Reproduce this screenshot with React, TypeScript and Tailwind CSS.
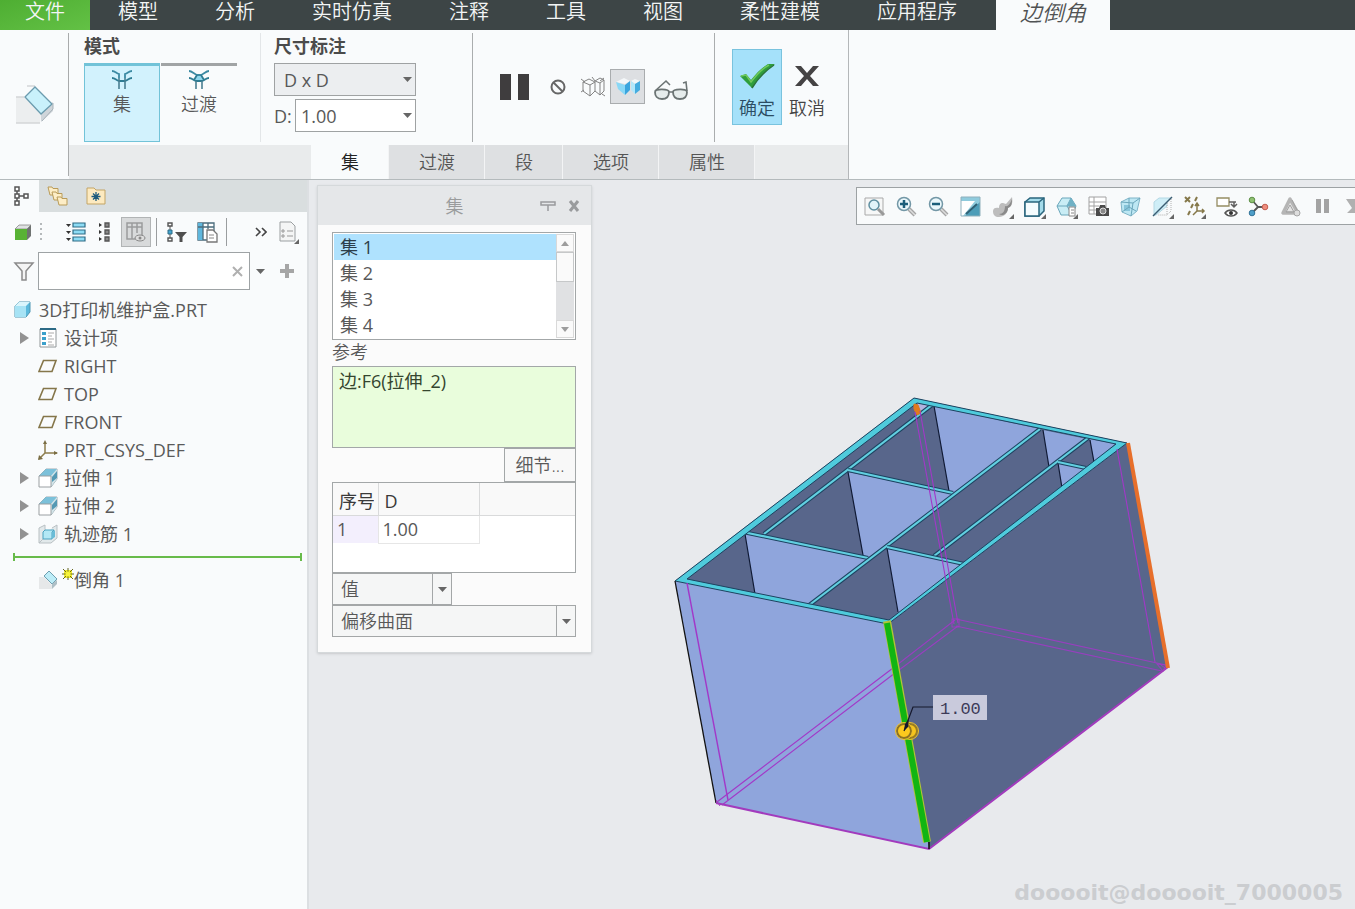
import { useState, type ReactNode } from "react";

const menus = ["模型", "分析", "实时仿真", "注释", "工具", "视图", "柔性建模", "应用程序"];
const panelTabs = ["集", "过渡", "段", "选项", "属性"];
const sets = ["集 1", "集 2", "集 3", "集 4"];

/* ---------- shared bits ---------- */

const Svg = ({ w = 20, h = 20, children }: { w?: number; h?: number; children: ReactNode }) => (
  <svg width={w} height={h} viewBox={`0 0 ${w} ${h}`} fill="none" className="shrink-0" aria-hidden="true">
    {children}
  </svg>
);

const Caret = () => (
  <Svg w={9} h={5}>
    <path d="M0 0h9L4.500 5z" fill="#666" />
  </Svg>
);

const Corner = () => <path d="M22 18v5h-5z" fill="#666" />;

/* ---------- ribbon icons ---------- */

const ChamferLarge = () => (
  <Svg w={40} h={40}>
    <path d="M2 12h8l17 18-1 8H2z" fill="#eceeef" />
    <path d="M2 12h8M2 38h24M13 1h8" stroke="#d3d6d8" strokeWidth="1.500" />
    <path d="M39 17v9L27 37v-9z" fill="#cfd5da" />
    <path d="M11 12 21 2l17 17-11 10z" fill="#c9f1fb" stroke="#6b9bae" strokeWidth="1.300" />
    <path d="M39 18v6L28 36" stroke="#a9b3b9" />
  </Svg>
);

const SetIcon = () => (
  <Svg w={22} h={20}>
    <path d="M1 1c3 0 4 2 7 3v4M21 1c-3 0-4 2-7 3v4" stroke="#3b8aa3" strokeWidth="1.800" />
    <path d="M1 8c3 0 4 2 7 3h6c3-1 4-3 7-3" stroke="#2e7c93" strokeWidth="1.800" />
    <path d="M8 8v11M14 8v11" stroke="#4a7f92" strokeWidth="1.600" />
  </Svg>
);

const TransitionIcon = () => (
  <Svg w={22} h={20}>
    <path d="M9 5h4l3 6H6z" fill="#8fd6ec" />
    <path d="M1 1c3 0 5 3 8 4h4c3-1 5-4 8-4" stroke="#3b8aa3" strokeWidth="1.800" />
    <path d="M1 8c3 0 4 2 7 3h6c3-1 4-3 7-3M9 5l-3 5M13 5l3 5" stroke="#2e7c93" strokeWidth="1.800" />
    <path d="M8 11v8M14 11v8" stroke="#4a7f92" strokeWidth="1.600" />
  </Svg>
);

const PauseLarge = () => (
  <Svg w={30} h={28}>
    <path d="M0 1h11v26H0zM18 1h11v26H18z" fill="#3f3d3e" />
  </Svg>
);

const BanIcon = () => (
  <Svg w={16} h={16}>
    <circle cx="8" cy="8" r="6.500" stroke="#666" strokeWidth="2" />
    <path d="M3.500 3.500l9 9" stroke="#666" strokeWidth="2" />
  </Svg>
);

const WireIcon = () => (
  <Svg w={26} h={22}>
    <path
      d="M3 6l6-3 6 3-5 3zM3 6v9l7 5V9M15 6v9l-5 5M15 5l5-3 4 2-4 3zM15 15l5 4V7M24 4v11l-4 4M1 3l4 3M1 16l3-2M12 1l3 4M24 2l-4 3M22 18l3 2"
      stroke="#838383"
    />
  </Svg>
);

const ShadedIcon = () => (
  <Svg w={26} h={20}>
    <path d="M1 5l8-4 6 3-5 3z" fill="#f4f7f9" />
    <path d="M1 5l9 3v10l-7-6z" fill="#8ad8f6" />
    <path d="M10 8l5-4v9l-5 5z" fill="#3aa5de" />
    <path d="M16 4l4-2 5 2-5 3z" fill="#f4f7f9" />
    <path d="M16 4l4 3v10l-4-4z" fill="#b3e7fa" />
    <path d="M20 7l5-3v9l-5 4z" fill="#45acdf" />
  </Svg>
);

const GlassesIcon = () => (
  <Svg w={36} h={22}>
    <path d="M2 14c0-4 14-3 14 0 0 4-2 7-7 7s-7-3-7-7zM20 14c0-3 14-4 14 0s-2 7-7 7-7-3-7-7z" fill="#e6ecec" stroke="#6c7474" strokeWidth="1.800" />
    <path d="M16 14h4M2 13L13 3l4 4M34 13l-1-9-3 1" stroke="#6c7474" strokeWidth="1.600" />
  </Svg>
);

const CheckLarge = () => (
  <Svg w={36} h={28}>
    <path d="M1 14l6-2 5 6C18 10 24 5 29 2h7C27 8 19 16 13 26z" fill="#2f9e3c" />
    <path d="M2 14l5-1 5 7C18 12 24 6 30 3" stroke="#6fc95b" strokeWidth="1.500" />
    <path d="M13 26C19 16 26 9 35 3" stroke="#2a7339" strokeWidth="1.500" />
  </Svg>
);

const CrossLarge = () => (
  <Svg w={26} h={22}>
    <path d="M1 1h6l6 7 6-7h6l-9 10 9 10h-6l-6-7-6 7H1l9-10z" fill="#454344" />
  </Svg>
);

/* ---------- model tree icons ---------- */

const TreeTabIcon = () => (
  <Svg w={16} h={22}>
    <path d="M4 6v10M6 11h5" stroke="#555" strokeWidth="1.500" />
    <path d="M2 2h4v4H2zM2 9h4v4H2zM2 16h4v4H2zM11 9h4v4h-4z" fill="#fff" stroke="#555" strokeWidth="1.500" />
  </Svg>
);

const FoldersIcon = () => (
  <Svg w={22} h={20}>
    {[[1, 1], [5, 6], [10, 11]].map(([x, y]) => (
      <path key={x} d={`M${x} ${y}h4l1 1.500h5V${y + 8}H${x + 2}z`} fill="#fdedc6" stroke="#b99b58" />
    ))}
  </Svg>
);

const FavoriteIcon = () => (
  <Svg w={20} h={20}>
    <path d="M1 2h7l2 2h9v14H1z" fill="#fdeac0" stroke="#c3a566" />
    <path d="M10 6v9M5.500 10.500h9M7 7.500l6 6M13 7.500l-6 6" stroke="#1e5b7d" strokeWidth="1.300" />
  </Svg>
);

const GreenCube = () => (
  <Svg>
    <path d="M2 7l4-4h12l-4 4z" fill="#dfe2e2" stroke="#888" strokeWidth=".8" />
    <path d="M14 7l4-4v11l-4 4z" fill="#6f7371" />
    <path d="M2 7h12v11H2z" fill="#58b234" />
  </Svg>
);

const DotsIcon = () => (
  <Svg w={8} h={20}>
    <path d="M3 1h2v2H3zM3 6h2v2H3zM3 11h2v2H3zM3 16h2v2H3z" fill="#b5b9bb" />
  </Svg>
);

const ExpandIcon = () => (
  <Svg w={22} h={22}>
    {[2, 9, 16].map((y) => (
      <g key={y}>
        <path d={`M1 ${y + 1}h5l-2.500 3z`} fill="#333" />
        <path d={`M8 ${y}h12v4H8z`} fill="#8ddcf5" stroke="#2f6c86" strokeWidth="1.200" />
      </g>
    ))}
  </Svg>
);

const CollapseIcon = () => (
  <Svg w={20} h={22}>
    {[2, 9, 16].map((y) => (
      <g key={y}>
        <path d={`M5 ${y}v4l3-2z`} fill="#333" />
        <path d={`M11 ${y}h4v4h-4z`} fill="#888" stroke="#555" strokeWidth="1.300" />
      </g>
    ))}
  </Svg>
);

const ColumnsIcon = () => (
  <Svg w={20} h={22}>
    <path d="M1 2h15v16H1zM1 6h15M6 2v16M11 2v10" stroke="#9a9c9d" strokeWidth="1.500" />
    <ellipse cx="14" cy="17" rx="5" ry="3" fill="#ddd" stroke="#888" />
    <circle cx="14" cy="17" r="1.500" fill="#888" />
  </Svg>
);

const TreeFilterIcon = () => (
  <Svg w={20} h={22}>
    <path d="M1 2h4v3H1zM1 17h4v3H1z" fill="#fff" stroke="#555" strokeWidth="1.400" />
    <path d="M1 9h4v4H1z" fill="#43a5d0" stroke="#2d6a85" />
    <path d="M3 5v4M3 13v4" stroke="#555" />
    <path d="M8 11h12l-4.500 5v5h-3v-5z" fill="#4f4f4f" />
  </Svg>
);

const TreeColumnsIcon = () => (
  <Svg w={22} h={22}>
    <path d="M2 2h16v17H2z" fill="#fff" stroke="#4b6c7c" strokeWidth="1.300" />
    <path d="M2 2h5v17H2z" fill="#5fb7dd" />
    <path d="M2 6h16M7 2v17M12 2v6" stroke="#4b6c7c" strokeWidth="1.300" />
    <path d="M11 9h6l4 4v8H11z" fill="#fff" stroke="#777" strokeWidth="1.300" />
    <path d="M13 14h5M13 17h5" stroke="#888" />
  </Svg>
);

const PageIcon = () => (
  <Svg w={22} h={24}>
    <path d="M3 2h11l4 4v15H3z" fill="#f4f5f5" stroke="#9b9fa1" />
    <path d="M5 10h2v2H5zM5 15h2v2H5zM10 11h6M10 16h6" stroke="#999" />
    <path d="M22 19v5h-5z" fill="#666" />
  </Svg>
);

const FunnelIcon = () => (
  <Svg w={22} h={20}>
    <path d="M2 2h18l-7 8v9H9v-9z" fill="#f4f4f4" stroke="#8b8b8b" strokeWidth="1.500" />
  </Svg>
);

const PartIcon = () => (
  <Svg>
    <path d="M2 6l4-4h11v10l-4 5H2z" fill="#5bb9dc" stroke="#4f97b3" />
    <path d="M2 6l4-4h11l-4 4z" fill="#daf5fc" />
    <path d="M2 6h11v11H2z" fill="#a7e3f5" />
  </Svg>
);

const DesignIcon = () => (
  <Svg>
    <path d="M2 1h16v18H2z" fill="#fff" stroke="#909698" />
    <path d="M2 1h16" stroke="#2c6a86" strokeWidth="2" />
    <path d="M4 4h4v3H4zM4 9h4v3H4zM4 14h4v3H4z" fill="#3ba0cb" />
    <path d="M10 5h6M10 8h4M10 11h6M10 14h4M10 17h6" stroke="#aaa" />
  </Svg>
);

const DatumPlane = () => (
  <Svg>
    <path d="M5.500 4.500H18l-4 11H1z" stroke="#85764a" strokeWidth="1.600" />
  </Svg>
);

const CsysIcon = () => (
  <Svg>
    <path d="M7 2v11h12M7 13l-6 6" stroke="#8d7d4c" strokeWidth="1.500" />
    <path d="M7 0l2 4H5zM20 13l-4 2v-4zM0 20l1-5 4 4z" fill="#7a6d43" />
  </Svg>
);

const ExtrudeIcon = () => (
  <Svg>
    <path d="M1 8l7-7h11v10l-6 8V8z" fill="#9aced9" stroke="#8a989e" strokeWidth=".8" />
    <path d="M1 8l7-7h11l-6 7z" fill="#7cc1da" />
    <path d="M13 8l6-7v10l-6 8z" fill="#d3e4e9" />
    <path d="M14 9l5-6v7l-5 4z" fill="#5499b4" />
    <path d="M1 8h12v11H1z" fill="#fff" stroke="#9a9fa2" />
  </Svg>
);

const RibIcon = () => (
  <Svg>
    <path d="M1 4l6-3v12l-6 6zM1 19h12l6-5V1l-5 3" fill="#e2e9eb" stroke="#b9c0c3" />
    <path d="M5 8l2-2h9l-2 2v7H5z" fill="#b3e8f5" stroke="#4ba1bf" />
    <path d="M14 8l3-2v7l-3 2z" fill="#69bcd7" />
  </Svg>
);

const ChamferIcon = () => (
  <Svg>
    <path d="M1 7h5l8 8v4H1z" fill="#e6e8e9" />
    <path d="M6 6l5-5 8 8-5 5z" fill="#bdedf8" stroke="#6f9fb0" />
    <path d="M19 10v4l-5 5v-5z" fill="#aebfc6" />
  </Svg>
);

/* ---------- graphics toolbar icons ---------- */

const Lens = ({ sign }: { sign: string }) => (
  <>
    <path d="M13 13l6 6" stroke="#a5a5a5" strokeWidth="4" />
    <path d="M13 13l6 6" stroke="#ddd" strokeWidth="1.500" />
    <circle cx="8" cy="8" r="6.500" fill="#eaf7fb" stroke="#7397a6" strokeWidth="1.500" />
    <path d={sign} stroke="#1b5e7a" strokeWidth="2.500" />
  </>
);

const viewTools: { label: string; icon: ReactNode }[] = [
  {
    label: "重新调整",
    icon: (
      <>
        <path d="M1 2h18v17H1z" fill="#f6f7f7" stroke="#a9a9a9" />
        <circle cx="10" cy="9" r="5" fill="#e2f4fa" stroke="#5f8fa1" strokeWidth="1.500" />
        <path d="M14 13l6 6" stroke="#999" strokeWidth="3" />
      </>
    ),
  },
  { label: "放大", icon: <Lens sign="M4 8h8M8 4v8" /> },
  { label: "缩小", icon: <Lens sign="M4 8h8" /> },
  {
    label: "重画",
    icon: (
      <>
        <path d="M1 1h19v19H1z" fill="#8fcbdd" />
        <path d="M20 6v14H5z" fill="#4d9db8" />
        <path d="M1 5h14L3 20H1z" fill="#fff" />
        <path d="M1 1h19v19H1z" stroke="#8fb0bc" />
        <path d="M6 18L17 8" stroke="#2f6175" strokeWidth="2" />
      </>
    ),
  },
  {
    label: "渲染选项",
    icon: (
      <>
        <path d="M1 15c0-3 3-4 6-3 0-3 1-5 4-5 1 0 2 1 3 1 2-2 4-5 6-7 1 6 0 9-4 11 0 5-4 9-9 9-4 0-6-2-6-6z" fill="#bdbdbd" />
        <path d="M7 18c4 0 6-3 6-8 3 1 5-2 7-7 0 6-1 8-4 9 0 5-5 9-9 6z" fill="#8a8a8a" />
        <Corner />
      </>
    ),
  },
  {
    label: "显示样式",
    icon: (
      <>
        <path d="M1 6l5-4h14v13l-5 5H1z" fill="#a5dceb" stroke="#2a657d" strokeWidth="1.500" />
        <path d="M1 6h14v14H1zM15 6l5-4" fill="#f5fcfe" stroke="#2a657d" strokeWidth="1.500" />
        <Corner />
      </>
    ),
  },
  {
    label: "已保存方向",
    icon: (
      <>
        <path d="M1 10l5-8h9l5 8-4 9H5z" fill="#c9edf5" stroke="#6ba7bb" />
        <path d="M1 10h19M15 2l-4 8 4 7" stroke="#6ba7bb" />
        <path d="M15 2l5 8h-9z" fill="#6fb1c5" />
        <path d="M13 11h6v9h-6z" fill="#fff" stroke="#888" />
        <path d="M15 14h3M15 17h3" stroke="#888" />
        <Corner />
      </>
    ),
  },
  {
    label: "视图管理器",
    icon: (
      <>
        <path d="M1 1h17v17H1zM1 6h17M1 10h10M1 14h8M6 1v17" fill="#fff" stroke="#a2a2a2" />
        <path d="M8 12h3l1-3h5l1 3h3v8H8z" fill="#4a4a4a" />
        <circle cx="15" cy="15" r="3" fill="#888" stroke="#ddd" />
      </>
    ),
  },
  {
    label: "透视图",
    icon: (
      <>
        <path d="M1 6l8-4h11l-3 13-6 5-9-4z" fill="#bde7f3" stroke="#7fb4c7" />
        <path d="M4 9h6v6H4z" fill="#87c5da" />
        <path d="M1 6l12 1 7-5M13 7l-2 13M9 2v9l7 4M9 11l-7 5" stroke="#6ba6bb" />
      </>
    ),
  },
  {
    label: "截面",
    icon: (
      <>
        <path d="M2 6l5-4h12l-4 4v4L4 19H2z" fill="#cfeef7" stroke="#b4d8e4" />
        <path d="M19 3v12l-4 4H6M15 7v12" stroke="#b0b0b0" strokeDasharray="1 1" />
        <path d="M1 20L20 1" stroke="#3b5d72" strokeWidth="1.500" />
        <Corner />
      </>
    ),
  },
  {
    label: "基准显示过滤器",
    icon: (
      <>
        <path d="M1 1l5 5M6 1L1 6M13 1l-2 4M9 8l-2 4M6 15l-2 4" stroke="#85784a" strokeWidth="2" />
        <path d="M13 8v7h7M13 15l-4 4M11 10l2-3 2 3M18 13l2 2-2 2" stroke="#85784a" strokeWidth="1.500" />
        <Corner />
      </>
    ),
  },
  {
    label: "注释显示",
    icon: (
      <>
        <path d="M1 2h12v8H1z" fill="#fff" stroke="#958d63" strokeWidth="1.300" />
        <path d="M13 6h7M18 6v4M15 8l3 3 3-3" stroke="#5f5f5f" strokeWidth="1.500" />
        <path d="M9 17c3-4 9-4 12 0-3 4-9 4-12 0z" fill="#fff" stroke="#555" strokeWidth="1.500" />
        <circle cx="15" cy="17" r="2" fill="#333" />
      </>
    ),
  },
  {
    label: "旋转中心",
    icon: (
      <>
        <path d="M10 11L4 4M10 11h8M10 11l-6 6" stroke="#555" strokeWidth="1.800" />
        <circle cx="4" cy="4" r="2.800" fill="#8fc172" stroke="#5e8f47" />
        <circle cx="17" cy="11" r="2.800" fill="#ee8d7e" stroke="#c45e50" />
        <circle cx="4" cy="17" r="2.800" fill="#4f9fc9" stroke="#337499" />
      </>
    ),
  },
  {
    label: "仿真",
    icon: (
      <>
        <path d="M10 3L3 17h15z" fill="#e4e4e4" stroke="#b5b5b5" strokeWidth="3.500" strokeLinejoin="round" />
        <path d="M10 9l-4 7h8zM12 4l6 12" stroke="#a0a0a0" />
        <circle cx="17" cy="17" r="3" fill="#ddd" stroke="#a5a5a5" />
      </>
    ),
  },
  { label: "暂停", icon: <path d="M4 3h5v14H4zM12 3h5v14h-5z" fill="#a3a3a3" /> },
  { label: "继续", icon: <path d="M2 3h9v5h4V4l6 6-6 7v-4l-4 4H3l5-5z" fill="#b0b0b0" /> },
];

/* ---------- sections ---------- */

const MenuBar = () => (
  <nav className="flex h-[30px] bg-[#3d4546] text-xl text-[#f3f5f5] font-[350]">
    <button className="w-[90px] pb-1.5 shrink-0 bg-[#5abb3b] bg-gradient-to-br from-[#4eae32] to-[#63c145] flex items-center justify-center leading-6">文件</button>
    <div className="flex gap-px">
      {menus.map((m) => (
        <button key={m} className="px-7 pb-1.5 flex items-center leading-6 whitespace-nowrap hover:bg-[#4d5657]">
          {m}
        </button>
      ))}
    </div>
    <button className="ml-[11px] px-6 pb-1.5 bg-[#f9fbfc] text-[#505253] text-[22px] leading-6 italic flex items-center whitespace-nowrap">边倒角</button>
  </nav>
);

const Ribbon = () => {
  const [tab, setTab] = useState("集");
  return (
    <header className="flex bg-[#f9fbfc] border-b border-[#b4babc]">
      <div className="w-[69px] my-[3px] shrink-0 border-r border-[#a9abac] flex items-center justify-center">
        <ChamferLarge />
      </div>
      <div className="flex flex-col border-r border-[#b4b7b9] text-lg">
        <div className="flex h-[115px] py-[3px]">
          {/* mode */}
          <div className="w-[192px] pl-[15px] border-r border-[#e3e6e8] font-[350]">
            <h2 className="font-bold leading-[26px] text-[#4b4b4b]">模式</h2>
            <div className="flex gap-px mt-1 leading-6">
              <button className="w-[76px] h-[79px] pt-1 bg-[#d2f2fd] border border-t-[3px] border-[#72c3d8] flex flex-col items-center gap-0.5">
                <SetIcon />
                集
              </button>
              <button className="w-[76px] h-[79px] pt-1 border-t-[3px] border-[#a1a4a5] flex flex-col items-center gap-0.5">
                <TransitionIcon />
                过渡
              </button>
            </div>
          </div>
          {/* dimension scheme */}
          <div className="w-[212px] pl-[13px] border-r border-[#aaadae]">
            <h2 className="font-bold leading-[26px] text-[#4b4b4b]">尺寸标注</h2>
            <div className="relative mt-1 w-[142px]">
              <select aria-label="尺寸标注" className="appearance-none w-full h-[33px] pl-[9px] border border-[#9fa2a3] bg-[#eceef0] outline-none">
                <option>D x D</option>
                <option>D1 x D2</option>
              </select>
              <span className="absolute right-1 top-3.5 pointer-events-none"><Caret /></span>
            </div>
            <div className="flex items-center mt-[3px] w-[142px]">
              <label htmlFor="dim-d" className="w-[21px] shrink-0">D:</label>
              <div className="relative flex-1">
                <input id="dim-d" defaultValue="1.00" className="w-full h-[33px] pl-[5px] border border-[#9fa2a3] bg-white outline-none" />
                <button aria-label="D 列表" className="absolute right-1 top-3.5"><Caret /></button>
              </div>
            </div>
          </div>
          {/* preview controls */}
          <div className="w-[242px] pl-[27px] pb-0.5 border-r border-[#aaadae] flex items-center">
            <button aria-label="暂停"><PauseLarge /></button>
            <button aria-label="无预览" className="ml-5"><BanIcon /></button>
            <button aria-label="分离" className="ml-3.5"><WireIcon /></button>
            <button aria-label="连接" className="ml-1 w-[35px] h-[35px] border border-[#a9acae] bg-[#dddfe2] flex items-center justify-center"><ShadedIcon /></button>
            <button aria-label="特征预览" className="ml-2 pt-1"><GlassesIcon /></button>
          </div>
          <div className="w-[133px] pl-[17px] pt-4 flex items-start leading-6 text-[#444] font-[350]">
            <button className="w-[50px] h-[76px] pt-3 bg-[#a5e1fa] border border-[#79c3de] text-[#2b4d63] flex flex-col items-center gap-1.5 whitespace-nowrap">
              <CheckLarge />
              确定
            </button>
            <button className="w-[50px] h-[76px] pt-4 flex flex-col items-center gap-[9px] whitespace-nowrap">
              <CrossLarge />
              取消
            </button>
          </div>
        </div>
        <div className="flex h-[34px] pl-[242px] bg-[#e9ebec] font-[350]">
          {panelTabs.map((t) => (
            <button
              key={t}
              onClick={() => setTab(t)}
              className={`px-[30px] leading-[34px] shadow-[inset_-1px_0_0_#f3f4f5] ${t === tab ? "bg-[#f9fbfc] text-[#222]" : "bg-[#dee0e2] text-[#555]"}`}
            >
              {t}
            </button>
          ))}
        </div>
      </div>
    </header>
  );
};

const treeItems = [
  { name: "设计项", icon: <DesignIcon />, open: true },
  { name: "RIGHT", icon: <DatumPlane /> },
  { name: "TOP", icon: <DatumPlane /> },
  { name: "FRONT", icon: <DatumPlane /> },
  { name: "PRT_CSYS_DEF", icon: <CsysIcon /> },
  { name: "拉伸 1", icon: <ExtrudeIcon />, open: true },
  { name: "拉伸 2", icon: <ExtrudeIcon />, open: true },
  { name: "轨迹筋 1", icon: <RibIcon />, open: true },
];

const ModelTree = () => (
  <aside className="w-[309px] shrink-0 bg-[#f9fbfc] border-r-2 border-[#dcdfe2]">
    <div className="flex h-8 bg-[#d9dedf]">
      <button aria-label="模型树" className="w-[39px] pl-0.5 bg-[#f9fbfc] flex items-center justify-center"><TreeTabIcon /></button>
      <button aria-label="文件夹浏览器" className="w-[38px] flex items-center justify-center"><FoldersIcon /></button>
      <button aria-label="收藏夹" className="w-[38px] flex items-center justify-center"><FavoriteIcon /></button>
    </div>
    <div className="flex items-center h-10 pl-[13px] pr-2">
      <button aria-label="模型"><GreenCube /></button>
      <span className="ml-1"><DotsIcon /></span>
      <button aria-label="全部展开" className="ml-5"><ExpandIcon /></button>
      <button aria-label="全部折叠" className="ml-[7px]"><CollapseIcon /></button>
      <button aria-label="显示列" className="ml-[7px] w-[30px] h-[30px] bg-[#d8dadb] border border-[#b1b4b5] flex items-center justify-center"><ColumnsIcon /></button>
      <span className="ml-[5px] w-px h-7 bg-[#9a9d9f]" />
      <button aria-label="树过滤器" className="ml-2.5"><TreeFilterIcon /></button>
      <button aria-label="树列" className="ml-[9px]"><TreeColumnsIcon /></button>
      <span className="ml-2 w-px h-7 bg-[#9a9d9f]" />
      <button aria-label="更多" className="ml-auto">
        <Svg w={12} h={10}>
          <path d="M1 1l4 4-4 4M7 1l4 4-4 4" stroke="#444" strokeWidth="1.600" />
        </Svg>
      </button>
      <button aria-label="设置" className="ml-2.5"><PageIcon /></button>
    </div>
    <div className="flex items-center pl-[13px] pr-3">
      <FunnelIcon />
      <div className="relative ml-[3px] w-[212px]">
        <input aria-label="过滤" className="w-full h-[38px] px-2 pr-7 border border-[#9ea3a5] bg-white outline-none text-lg" />
        <button aria-label="清除" className="absolute right-1.5 top-3.5">
          <Svg w={12} h={11}>
            <path d="M1 1l9 9M10 1l-9 9" stroke="#b0b0b0" strokeWidth="2" />
          </Svg>
        </button>
      </div>
      <button aria-label="过滤器选项" className="ml-1.5"><Caret /></button>
      <button aria-label="添加" className="ml-auto">
        <Svg w={16} h={16}>
          <path d="M8 1v14M1 8h14" stroke="#a6a6a6" strokeWidth="4" />
        </Svg>
      </button>
    </div>

    <div className="pt-1.5 text-lg leading-7 text-[#5a5a5a]">
      <div className="flex items-center gap-1.5 pl-[13px] h-7"><PartIcon />3D打印机维护盒.PRT</div>
      <ul>
        {treeItems.map((item) => (
          <li key={item.name} className="flex items-center h-7 pl-[18px]">
            <span className="w-5">
              {item.open && (
                <button aria-label={`展开 ${item.name}`} className="block">
                  <Svg w={12} h={12}>
                    <path d="M2 0v12l9-6z" fill="#929292" />
                  </Svg>
                </button>
              )}
            </span>
            {item.icon}
            <span className="ml-1.5">{item.name}</span>
          </li>
        ))}
      </ul>
      {/* insert-here marker */}
      <div className="h-[18px] ml-[13px] mr-[5px] flex items-center">
        <span className="w-0.5 h-2 bg-[#68bb4a]" />
        <span className="flex-1 h-0.5 bg-[#68bb4a]" />
        <span className="w-0.5 h-2 bg-[#68bb4a]" />
      </div>
      <div className="flex items-center h-7 pl-[38px]">
        <ChamferIcon />
        <span className="ml-1 mb-3">
          <Svg w={12} h={12}>
            <path d="M2 2h8v8H2z" fill="#f3ee2d" />
            <path d="M6 0v12M0 6h12M1 1l10 10M11 1L1 11" stroke="#66661f" />
            <circle cx="6" cy="6" r="2.500" fill="#f8f53a" />
          </Svg>
        </span>
        倒角 1
      </div>
    </div>
  </aside>
);

const SplitSelect = ({ label, options, wide }: { label: string; options: string[]; wide?: boolean }) => (
  <div className={`relative ${wide ? "w-full" : "w-[120px]"}`}>
    <select aria-label={label} className="appearance-none block w-full h-8 pl-2 border border-[#a4a7a8] bg-[#f5f6f6] font-[350] outline-none">
      {options.map((o) => (
        <option key={o}>{o}</option>
      ))}
    </select>
    <span className="absolute right-0 inset-y-0 w-5 border-l border-[#a4a7a8] flex items-center justify-center pointer-events-none">
      <Caret />
    </span>
  </div>
);

const SetsPanel = () => {
  const [selected, setSelected] = useState(0);
  return (
    <section className="w-[275px] shrink-0 self-start ml-2 mt-[5px] border border-[#d5d9db] bg-[#fbfbfb] text-lg text-[#585858] shadow-sm">
      <div className="grid grid-cols-[1fr_auto_1fr] items-center h-[39px] px-[11px] bg-[#e5e7e9]">
        <span />
        <h2 className="text-[#9a9c9d] font-[350]">集</h2>
        <div className="flex justify-end items-center gap-3">
          <button aria-label="固定">
            <Svg w={16} h={12}>
              <path d="M1 2h14v3H1zM8 5v6" stroke="#999b9d" strokeWidth="1.500" />
            </Svg>
          </button>
          <button aria-label="关闭">
            <Svg w={12} h={12}>
              <path d="M2 1l8 10M10 1L2 11" stroke="#999b9d" strokeWidth="3" />
            </Svg>
          </button>
        </div>
      </div>
      <div className="pl-3.5 pr-[15px] pt-[7px] pb-[15px]">
        <div className="flex border border-[#a3a7a8] bg-white p-px">
          <ul role="listbox" aria-label="集" className="flex-1">
            {sets.map((s, i) => (
              <li
                key={s}
                role="option"
                aria-selected={i === selected}
                onClick={() => setSelected(i)}
                className={`h-[26px] leading-[26px] pl-1.5 ${i === selected ? "bg-[#afe2fe] text-[#2c3e4a]" : ""}`}
              >
                {s}
              </li>
            ))}
          </ul>
          <div className="w-[18px] bg-[#e0e1e3] flex flex-col">
            <button aria-label="向上" className="h-[18px] bg-[#fafafa] border border-[#d9d9d9] flex items-center justify-center">
              <Svg w={8} h={5}>
                <path d="M0 5h8L4 0z" fill="#9d9d9d" />
              </Svg>
            </button>
            <div className="h-[30px] bg-[#fafafa] border border-[#c6c8c9]" />
            <button aria-label="向下" className="mt-auto h-[18px] bg-[#fafafa] border border-[#d9d9d9] flex items-center justify-center">
              <Svg w={8} h={5}>
                <path d="M0 0h8L4 5z" fill="#9d9d9d" />
              </Svg>
            </button>
          </div>
        </div>
        <h3 className="leading-6 pb-0.5 font-[350]">参考</h3>
        <div className="h-[82px] border border-[#a3a7a8] bg-[#e9fddc] pl-1.5 leading-7 text-[#35452f]">边:F6(拉伸_2)</div>
        <div className="flex justify-end">
          <button className="w-[72px] h-[34px] border border-[#a3a7a8] bg-[#f8f8f8] font-[350]">细节...</button>
        </div>
        <div className="h-[91px] border border-[#a3a7a8] bg-white">
          <table className="w-full table-fixed border-collapse text-left">
            <thead>
              <tr className="h-8 bg-[#f9f9f9] text-[#3a3a3a] leading-6">
                <th className="w-[45px] p-0 pl-1.5 pt-1 pr-1 font-normal border-r border-b border-[#d9dadb]">
                  <span className="block overflow-hidden whitespace-nowrap">序号</span>
                </th>
                <th className="w-[101px] p-0 pl-1.5 pt-1 font-normal border-r border-b border-[#d9dadb]">D</th>
                <th className="border-b border-[#d9dadb]" aria-label="空" />
              </tr>
            </thead>
            <tbody>
              <tr className="h-7 leading-6">
                <td className="pl-1 bg-[#f3effd]">1</td>
                <td className="pl-1 border border-[#e6e6e6]">1.00</td>
                <td />
              </tr>
            </tbody>
          </table>
        </div>
        <SplitSelect label="值类型" options={["值", "参考"]} />
        <SplitSelect label="创建方法" options={["偏移曲面", "相切距离"]} wide />
      </div>
    </section>
  );
};

// Divider walls of the box, drawn as cyan strips with dark edges
const walls = [
  "M932 405L764 534",
  "M743 532L868 558",
  "M848 470L953 493",
  "M1040 429L808 606",
  "M1088 438L934 556",
  "M887 547L964 564",
  "M1058 462L1086 468",
];

const Model = () => (
  <svg width="510" height="470" viewBox="670 390 510 470" fill="none" className="ml-[78px] mt-[165px] shrink-0" role="img" aria-label="3D打印机维护盒">
    {/* body */}
    <path d="M914 398L1127 443L888 624L675 581z" fill="#58668b" />
    <path d="M675 581L888 624L929 849L716 803z" fill="#8fa5dc" />
    <path d="M888 624L1127 443L1168 667L929 849z" fill="#58668b" />
    {/* lit pocket walls */}
    <g fill="#8fa5dc">
      <path d="M934 406L1040 429L953 493L949 491z" />
      <path d="M848 472L953 494L869 557L863 555z" />
      <path d="M745 534L868 559L808 605L755 594z" />
      <path d="M887 548L964 564L898 613z" />
      <path d="M1043 430L1087 439L1049 467z" />
      <path d="M1090 439L1115 444L1094 462z" />
      <path d="M1058 463L1086 469L1062 488z" />
      <path d="M917 403L931 406L921 413z" fill="#b3b3df" />
    </g>
    <path d="M934 406l15 85M848 472l15 83M745 534l10 60M887 548l11 64M1043 430l6 37M1090 440l4 22M1058 463l4 25" stroke="#101a35" strokeWidth="1.200" />
    {walls.map((d) => (
      <g key={d}>
        <path d={d} stroke="#1c4360" strokeWidth="4.200" />
        <path d={d} stroke="#62cfe0" strokeWidth="2.200" />
      </g>
    ))}
    {/* rim */}
    <path d="M914 398L1127 443L888 624L675 581zM917 403L687 579L889 620L1116 444z" fill="#4fcbdc" fillRule="evenodd" stroke="#1c4360" />
    <path d="M675 581l41 222" stroke="#111" strokeWidth="1.300" />
    <path d="M914 404l4 1 3 8-4 2-3-6z" fill="#e07a1e" stroke="#e07a1e" />
    {/* hidden edges */}
    <g stroke="#a238c8" strokeWidth="1.100">
      <path d="M915 412l39 212M920 411l38 212M717 802L893 668M722 805L895 673M1117 449l38 213" />
      <path d="M893 668l62-48M895 673l63-47M956 619l210 46M956 626l206 45" strokeOpacity=".85" />
      <path d="M687 583l41 217" strokeWidth="1.400" />
      <path d="M952 619h7v8h-7zM1157 664l9 1-3 6z" strokeOpacity=".8" />
    </g>
    <path d="M716 803L929 849L1168 667" stroke="#a23bbd" strokeWidth="2" />
    <path d="M716 800l4 6M1160 664l6 5" stroke="#a23bbd" />
    {/* chamfered edges */}
    <path d="M1128 443l40 225" stroke="#e76f2b" strokeWidth="4" />
    <path d="M887 621l40 221" stroke="#b3c437" strokeWidth="8" />
    <path d="M887 623l40 219" stroke="#11b512" strokeWidth="6" />
    <path d="M929 842v7" stroke="#111" strokeWidth="1.500" />
    {/* drag handle */}
    <circle cx="910" cy="731" r="7" fill="#f6c51d" stroke="#9b7d20" strokeWidth="2" />
    <circle cx="910" cy="731" r="8.500" stroke="#eec02a" />
    <circle cx="904" cy="731" r="7" fill="#fbc91e" stroke="#8f7320" strokeWidth="2" />
    <circle cx="904" cy="731" r="8.500" stroke="#eec02a" />
    <path d="M933 707h-20l-9 24" stroke="#15182c" strokeWidth="1.200" />
    <path d="M909 719l-1 8-4 4 1-7z" fill="#15182c" />
    <rect x="933" y="695" width="54" height="25" fill="#c9cadc" />
    <text x="940" y="714" fontSize="17" fill="#3d3a58" className="font-['Liberation_Mono',monospace]">1.00</text>
  </svg>
);

const Viewport = () => (
  <main className="flex-1 min-w-0 flex flex-col overflow-hidden">
    <div className="flex justify-end mt-[7px] -mr-4">
      <div className="flex h-[38px] pl-0.5 bg-[#f8fafb] border border-r-0 border-[#9da2a4]">
        {viewTools.map((tool) => (
          <button key={tool.label} aria-label={tool.label} title={tool.label} className="w-8 pt-0.5 flex items-center justify-center hover:bg-[#dff3fb]">
            <svg width="22" height="23" viewBox="0 0 22 23" fill="none" aria-hidden="true">{tool.icon}</svg>
          </button>
        ))}
      </div>
    </div>
    <Model />
    <p className="mt-auto mr-3 mb-1 self-end text-[22px] font-bold leading-6 text-[#cbcdd0] font-['DejaVu_Sans',sans-serif]">dooooit@dooooit_7000005</p>
  </main>
);

export default function App() {
  return (
    <div className="min-h-screen flex flex-col bg-[#e8eaed] text-[#585858] overflow-hidden font-['Open_Sans','Noto_Sans_CJK_SC',sans-serif]">
      <MenuBar />
      <Ribbon />
      <div className="flex flex-1">
        <ModelTree />
        <SetsPanel />
        <Viewport />
      </div>
    </div>
  );
}
